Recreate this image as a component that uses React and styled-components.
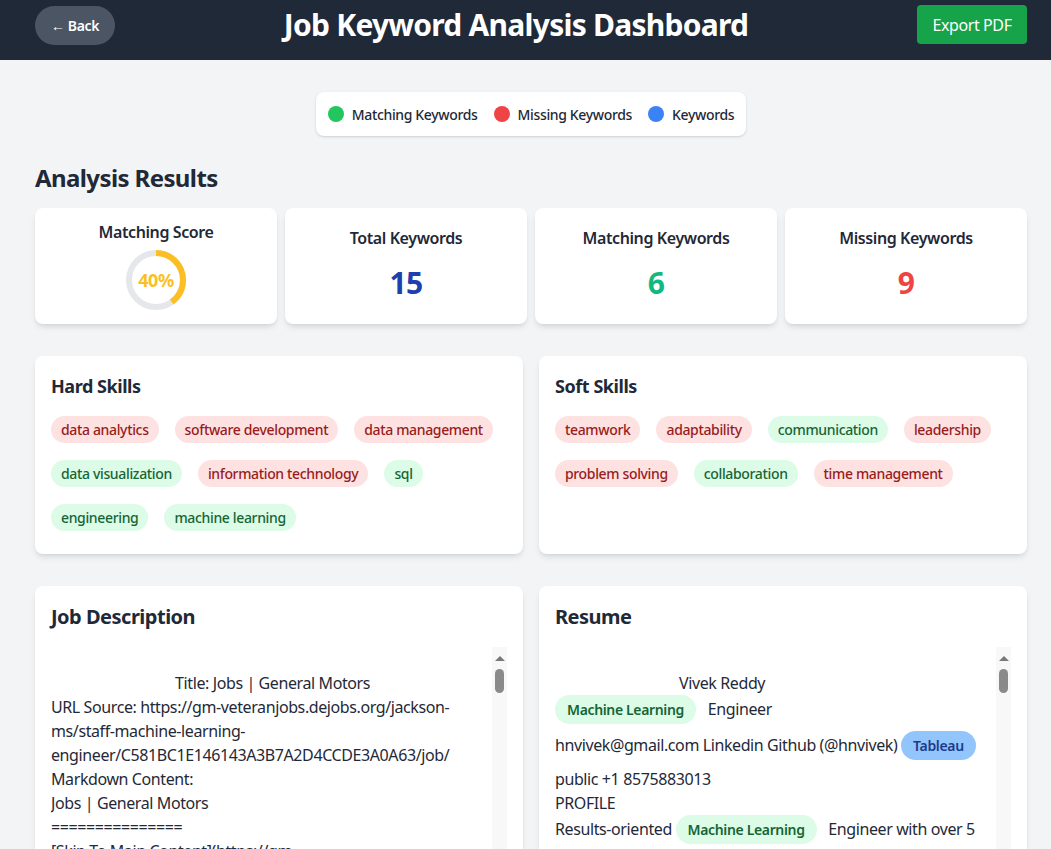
import React from "react";
import styled, {createGlobalStyle} from "styled-components";

const GlobalStyle = createGlobalStyle`
  body {
    margin: 0;
    background: #f3f4f6;
    font-family: "Noto Sans", "Open Sans", sans-serif;
    color: #1f2937;
  }

  * {
    letter-spacing: -0.025em;
  }
`;

const hardSkills = [
  {name: "data analytics", match: false},
  {name: "software development", match: false},
  {name: "data management", match: false},
  {name: "data visualization", match: true},
  {name: "information technology", match: false},
  {name: "sql", match: true},
  {name: "engineering", match: true},
  {name: "machine learning", match: true},
];

const softSkills = [
  {name: "teamwork", match: false},
  {name: "adaptability", match: false},
  {name: "communication", match: true},
  {name: "leadership", match: false},
  {name: "problem solving", match: false},
  {name: "collaboration", match: true},
  {name: "time management", match: false},
];

const indent = " ".repeat(33);
const base = "https://gm-veteranjobs.dejobs.org";

const jobText = `
${indent}Title: Jobs | General Motors
URL Source: ${base}/jackson-ms/staff-machine-learning-engineer/C581BC1E146143A3B7A2D4CCDE3A0A63/job/
Markdown Content:
Jobs | General Motors
===============
[Skip To Main Content](${base}/jackson-ms/staff-machine-learning-engineer/C581BC1E146143A3B7A2D4CCDE3A0A63/job/#direct_content)
[![Image 1: General Motors](${base}/logo.png)](${base}/)
Staff Machine Learning Engineer
===============================
Jackson, MS
Job Description
Work Arrangement: Hybrid. This role is categorized as hybrid; the successful candidate is expected to report to the office at least three times per week.
What You'll Do
* Design, build and deploy machine learning models that power vehicle software and manufacturing analytics.
* Partner with data engineering to create reliable data pipelines and feature stores.
* Lead technical design reviews and mentor engineers across the team.
`;

const resumeTail = `
EXPERIENCE
Data Scientist, Boston, MA
* Built predictive models for customer churn, improving retention by 12% through targeted campaigns.
* Designed and deployed scalable ETL pipelines processing over 2TB of data daily.
* Created interactive dashboards to communicate insights to business leaders.
`;

function ScoreRing({value}) {
  const r = 27;
  const c = 2 * Math.PI * r;
  return (
    <Ring>
      <svg width="60" height="60" viewBox="0 0 60 60">
        <circle cx="30" cy="30" r={r} fill="none" stroke="#e5e7eb" strokeWidth="6"/>
        <circle cx="30" cy="30" r={r} fill="none" stroke="#fbbf24" strokeWidth="6"
                strokeDasharray={`${c * value / 100} ${c}`} transform="rotate(-90 30 30)"/>
      </svg>
      <RingLabel>{value}%</RingLabel>
    </Ring>
  );
}

function SkillCard({title, skills}) {
  return (
    <Card>
      <CardTitle>{title}</CardTitle>
      <TagList>
        {skills.map((s) => (
          <Tag key={s.name} $match={s.match}>{s.name}</Tag>
        ))}
      </TagList>
    </Card>
  );
}

function DocCard({title, children}) {
  return (
    <Card>
      <DocTitle>{title}</DocTitle>
      <DocFrame>
        <DocText>{children}</DocText>
        <ScrollTrack>
          <ScrollArrow/>
          <ScrollThumb/>
        </ScrollTrack>
      </DocFrame>
    </Card>
  );
}

export default function App() {
  return (
    <>
      <GlobalStyle/>
      <Header>
        <BackButton>← Back</BackButton>
        <Title>Job Keyword Analysis Dashboard</Title>
        <ExportButton>Export PDF</ExportButton>
      </Header>
      <Main>
        <LegendWrap>
          <Legend>
            <LegendItem><Dot $color="#22c55e"/>Matching Keywords</LegendItem>
            <LegendItem><Dot $color="#ef4444"/>Missing Keywords</LegendItem>
            <LegendItem><Dot $color="#3b82f6"/>Keywords</LegendItem>
          </Legend>
        </LegendWrap>

        <SectionTitle>Analysis Results</SectionTitle>
        <StatsGrid>
          <StatCard $score>
            <StatLabel>Matching Score</StatLabel>
            <ScoreRing value={40}/>
          </StatCard>
          <StatCard>
            <StatLabel>Total Keywords</StatLabel>
            <StatValue $color="#1e40af">15</StatValue>
          </StatCard>
          <StatCard>
            <StatLabel>Matching Keywords</StatLabel>
            <StatValue $color="#10b981">6</StatValue>
          </StatCard>
          <StatCard>
            <StatLabel>Missing Keywords</StatLabel>
            <StatValue $color="#ef4444">9</StatValue>
          </StatCard>
        </StatsGrid>

        <TwoCols>
          <SkillCard title="Hard Skills" skills={hardSkills}/>
          <SkillCard title="Soft Skills" skills={softSkills}/>
        </TwoCols>

        <TwoCols>
          <DocCard title="Job Description">{jobText}</DocCard>
          <DocCard title="Resume">
            {"\n" + indent + "Vivek Reddy\n"}
            <Mark $kind="match">Machine Learning</Mark>
            {" Engineer\nhnvivek@gmail.com Linkedin Github (@hnvivek) "}
            <Mark $kind="key">Tableau</Mark>
            {"\npublic +1 8575883013\nPROFILE\nResults-oriented "}
            <Mark $kind="match">Machine Learning</Mark>
            {" Engineer with over 5 years of experience designing and deploying scalable data pipelines and predictive models."}
            {resumeTail}
          </DocCard>
        </TwoCols>
      </Main>
    </>
  );
}

const Header = styled.header`
  height: 60px;
  box-sizing: border-box;
  background: #1f2937;
  display: flex;
  align-items: center;
  justify-content: space-between;
  padding: 0 24px 11px 35px;
`;

const BackButton = styled.button`
  border: none;
  background: #4b5563;
  color: #fff;
  font-family: inherit;
  font-size: 14px;
  font-weight: 600;
  height: 39px;
  width: 80px;
  border-radius: 999px;
  margin-top: 1px;
`;

const Title = styled.h1`
  margin: 0;
  color: #fff;
  font-size: 30px;
  font-weight: 700;
  line-height: 36px;
`;

const ExportButton = styled.button`
  border: none;
  background: #16a34a;
  color: #fff;
  font-family: inherit;
  font-size: 16px;
  height: 39px;
  width: 110px;
  border-radius: 4px;
`;

const Main = styled.main`
  padding: 32px 24px 40px 35px;
`;

const LegendWrap = styled.div`
  display: flex;
  justify-content: center;
`;

const Legend = styled.div`
  display: flex;
  align-items: center;
  gap: 16px;
  background: #fff;
  border-radius: 8px;
  padding: 0 12px;
  height: 44px;
  box-shadow: 0 1px 3px rgba(0, 0, 0, 0.1), 0 1px 2px rgba(0, 0, 0, 0.06);
`;

const LegendItem = styled.div`
  display: flex;
  align-items: center;
  gap: 8px;
  font-size: 14px;
  font-weight: 500;
  color: #1f2937;
`;

const Dot = styled.span`
  width: 16px;
  height: 16px;
  border-radius: 50%;
  background: ${(p) => p.$color};
`;

const SectionTitle = styled.h2`
  margin: 26px 0 14px;
  font-size: 24px;
  font-weight: 700;
  line-height: 32px;
`;

const StatsGrid = styled.div`
  display: grid;
  grid-template-columns: repeat(4, 1fr);
  gap: 8px;
  margin-bottom: 32px;
`;

const Card = styled.div`
  background: #fff;
  border-radius: 8px;
  padding: 16px;
  box-shadow: 0 4px 6px -1px rgba(0, 0, 0, 0.1), 0 2px 4px -2px rgba(0, 0, 0, 0.08);
  min-width: 0;
`;

const StatCard = styled(Card)`
  height: 116px;
  box-sizing: border-box;
  display: flex;
  flex-direction: column;
  align-items: center;
  gap: ${(p) => (p.$score ? "8px" : "19px")};
  padding-top: ${(p) => (p.$score ? "14px" : "20px")};
`;

const StatLabel = styled.div`
  font-size: 16px;
  font-weight: 600;
  line-height: 20px;
  color: #1f2937;
`;

const StatValue = styled.div`
  font-size: 30px;
  font-weight: 700;
  line-height: 32px;
  color: ${(p) => p.$color};
`;

const Ring = styled.div`
  position: relative;
  width: 60px;
  height: 60px;
`;

const RingLabel = styled.span`
  position: absolute;
  inset: 0;
  display: flex;
  align-items: center;
  justify-content: center;
  font-size: 18px;
  font-weight: 700;
  color: #fbbf24;
`;

const TwoCols = styled.div`
  display: grid;
  grid-template-columns: 1fr 1fr;
  gap: 16px;
  margin-bottom: 32px;
`;

const CardTitle = styled.h3`
  margin: 0 0 16px;
  font-size: 18px;
  font-weight: 700;
  line-height: 28px;
`;

const TagList = styled.div`
  display: flex;
  flex-wrap: wrap;
  gap: 17px 16px;
  padding-bottom: 7px;
`;

const Tag = styled.span`
  height: 27px;
  display: inline-flex;
  align-items: center;
  padding: 0 10px;
  border-radius: 999px;
  font-size: 14px;
  font-weight: 500;
  background: ${(p) => (p.$match ? "#dcfce7" : "#fee2e2")};
  color: ${(p) => (p.$match ? "#166534" : "#991b1b")};
`;

const DocTitle = styled.h3`
  margin: 0 0 15px;
  font-size: 20px;
  font-weight: 700;
  line-height: 30px;
`;

const DocFrame = styled.div`
  display: flex;
  height: 400px;
`;

const DocText = styled.div`
  flex: 1;
  min-width: 0;
  white-space: pre-wrap;
  overflow-wrap: break-word;
  overflow: hidden;
  font-size: 16px;
  line-height: 24px;
  color: #1f2937;
`;

const ScrollTrack = styled.div`
  width: 15px;
  flex-shrink: 0;
  background: #f8f8f8;
  display: flex;
  flex-direction: column;
  align-items: center;
  padding-top: 9px;
  box-sizing: border-box;
`;

const ScrollArrow = styled.div`
  width: 0;
  height: 0;
  border-left: 5px solid transparent;
  border-right: 5px solid transparent;
  border-bottom: 5px solid #787878;
  margin-bottom: 8px;
`;

const ScrollThumb = styled.div`
  width: 9px;
  height: 24px;
  border-radius: 5px;
  background: #8a8a8a;
`;

const markColors = {
  match: {bg: "#dcfce7", fg: "#166534"},
  key: {bg: "#93c5fd", fg: "#1e3a8a"},
};

const Mark = styled.span`
  display: inline-block;
  padding: 4px 12px;
  margin: 0 8px 7px 0;
  border-radius: 999px;
  font-size: 14px;
  font-weight: 600;
  line-height: 21px;
  background: ${(p) => markColors[p.$kind].bg};
  color: ${(p) => markColors[p.$kind].fg};
`;
